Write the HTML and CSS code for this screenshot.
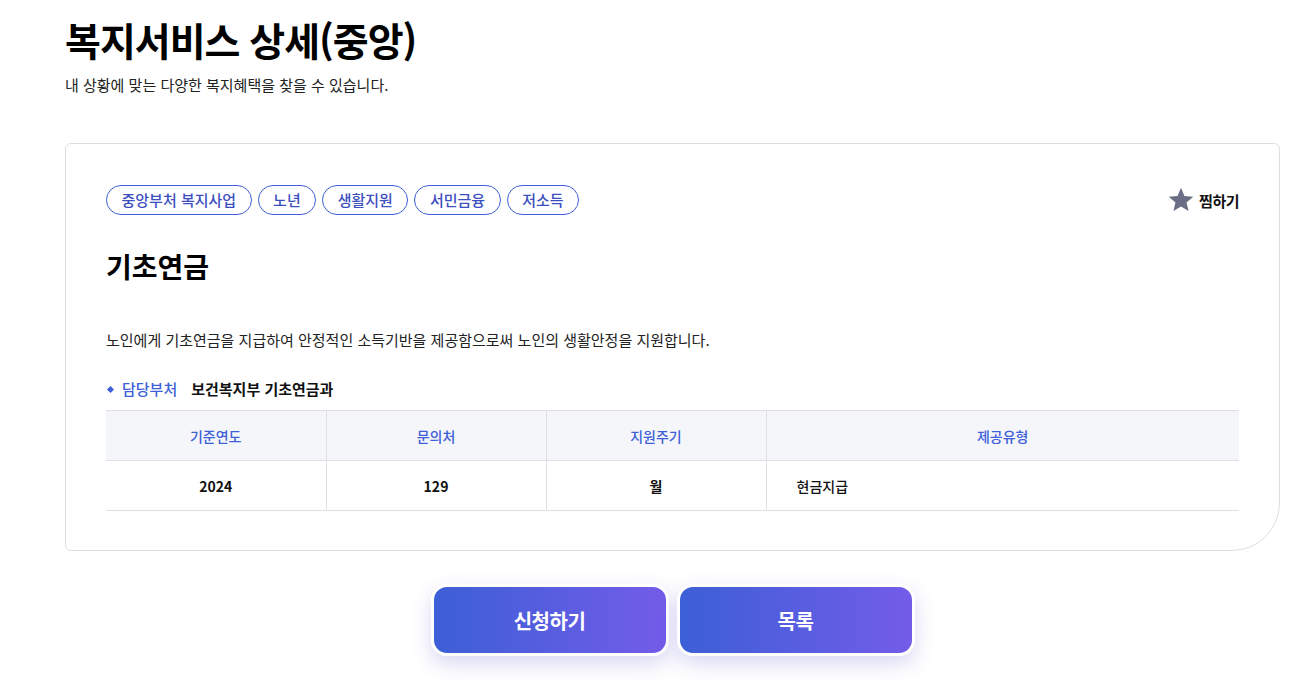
FILE: index.html
```html
<!DOCTYPE html>
<html lang="ko">
<head>
    <meta charset="UTF-8">
    <meta name="viewport" content="width=device-width, initial-scale=1.0">
    <title>복지서비스 상세(중앙)</title>
    <link rel="stylesheet" href="styles.css">
</head>
<body>
    <div class="page">
        <h1 class="page-title">복지서비스 상세(중앙)</h1>
        <p class="page-desc">내 상황에 맞는 다양한 복지혜택을 찾을 수 있습니다.</p>

        <div class="detail-card">
            <div class="card-top">
                <ul class="tags">
                    <li>중앙부처 복지사업</li>
                    <li>노년</li>
                    <li>생활지원</li>
                    <li>서민금융</li>
                    <li>저소득</li>
                </ul>
                <button class="wish" type="button">
                    <svg width="26" height="26" viewBox="0 0 24 24"><path d="M12 .8l3.2 7.5 8.1.6-6.2 5.3 1.9 7.9L12 17.9 5 22.1l1.9-7.9L.7 8.9l8.1-.6z" fill="#6b6f85"/></svg>
                    찜하기
                </button>
            </div>

            <h2 class="service-name">기초연금</h2>
            <p class="service-desc">노인에게 기초연금을 지급하여 안정적인 소득기반을 제공함으로써 노인의 생활안정을 지원합니다.</p>

            <div class="dept">
                <span class="dept-label">담당부처</span>
                <span class="dept-value">보건복지부 기초연금과</span>
            </div>

            <table class="info-table">
                <colgroup>
                    <col class="col-narrow">
                    <col class="col-narrow">
                    <col class="col-narrow">
                    <col>
                </colgroup>
                <thead>
                    <tr>
                        <th>기준연도</th>
                        <th>문의처</th>
                        <th>지원주기</th>
                        <th>제공유형</th>
                    </tr>
                </thead>
                <tbody>
                    <tr>
                        <td>2024</td>
                        <td>129</td>
                        <td>월</td>
                        <td class="left">현금지급</td>
                    </tr>
                </tbody>
            </table>
        </div>

        <div class="actions">
            <a class="btn" href="#">신청하기</a>
            <a class="btn" href="#">목록</a>
        </div>
    </div>
</body>
</html>
```

FILE: styles.css
```css
* {
    box-sizing: border-box;
}
body {
    margin: 0;
    font-family: "Noto Sans CJK KR", "Noto Sans", sans-serif;
    color: #111;
    background-color: #fff;
}
.page {
    padding: 13px 12px 40px 65px;
}
.page-title {
    margin: 0;
    font-size: 39px;
    line-height: 52px;
    font-weight: 700;
    letter-spacing: -1px;
    color: #000;
}
.page-desc {
    margin: 8px 0 0;
    font-size: 15px;
    line-height: 24px;
    color: #222;
}
.detail-card {
    margin-top: 46px;
    border: 1px solid #dedede;
    border-radius: 6px 6px 48px 6px;
    padding: 41px 40px 39px 40px;
}
.card-top {
    display: flex;
    align-items: center;
    justify-content: space-between;
}
.tags {
    display: flex;
    gap: 6px;
    list-style: none;
    margin: 0;
    padding: 0;
}
.tags li {
    height: 30px;
    line-height: 28px;
    padding: 0 14.5px;
    border: 1px solid #3d5fd8;
    border-radius: 15px;
    font-size: 15px;
    font-weight: 500;
    color: #3c4fbf;
}
.wish {
    display: flex;
    align-items: center;
    gap: 5px;
    border: 0;
    background: none;
    padding: 0;
    font-family: inherit;
    font-size: 15px;
    font-weight: 700;
    color: #111;
    letter-spacing: -0.5px;
    cursor: pointer;
}
.service-name {
    margin: 33px 0 0;
    font-size: 28px;
    line-height: 36px;
    font-weight: 700;
    color: #000;
}
.service-desc {
    margin: 44px 0 0;
    font-size: 15px;
    line-height: 24px;
    color: #222;
}
.dept {
    margin-top: 25px;
    display: flex;
    align-items: center;
    font-size: 15px;
    line-height: 24px;
}
.dept-label {
    display: flex;
    align-items: center;
    color: #3d5fd8;
    font-weight: 500;
}
.dept-label::before {
    content: "";
    width: 5px;
    height: 5px;
    background-color: #3d5fd8;
    transform: rotate(45deg);
    margin: 0 9px 0 2px;
}
.dept-value {
    margin-left: 14px;
    font-weight: 700;
    color: #111;
}
.info-table {
    width: 100%;
    margin-top: 9px;
    table-layout: fixed;
    border-collapse: collapse;
    font-size: 14px;
}
.col-narrow {
    width: 220px;
}
.info-table th,
.info-table td {
    border-top: 1px solid #e0e0e4;
    border-bottom: 1px solid #e0e0e4;
    border-left: 1px solid #e0e0e4;
    text-align: center;
}
.info-table th:first-child,
.info-table td:first-child {
    border-left: 0;
}
.info-table th {
    height: 50px;
    background-color: #f5f6fa;
    color: #3d5fd8;
    font-weight: 500;
}
.info-table td {
    height: 50px;
    color: #111;
    font-weight: 700;
}
.info-table td.left {
    text-align: left;
    padding-left: 30px;
    font-weight: 500;
}
.actions {
    display: flex;
    justify-content: center;
    gap: 8px;
    margin-top: 33px;
}
.btn {
    width: 238px;
    height: 72px;
    display: flex;
    align-items: center;
    justify-content: center;
    border: 3px solid #fff;
    border-radius: 16px;
    background: linear-gradient(90deg, #3c5fd7, #735ce9);
    box-shadow: 0 8px 20px rgba(84, 78, 200, 0.22);
    color: #fff;
    font-size: 20px;
    font-weight: 700;
    text-decoration: none;
    letter-spacing: -0.5px;
}
```
